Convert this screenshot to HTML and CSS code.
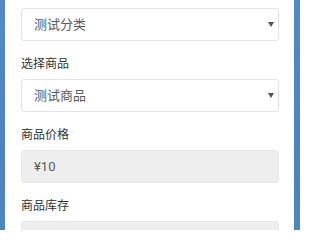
FILE: index.html
```html
<!DOCTYPE html>
<html lang="zh-CN">
<head>
<meta charset="utf-8">
<title>商品</title>
<link rel="stylesheet" href="styles.css">
</head>
<body>
<div class="frame">
  <div class="screen">
    <form class="form">
      <div class="field select"><span class="value">测试分类</span><span class="caret"></span></div>
      <label class="label">选择商品</label>
      <div class="field select"><span class="value">测试商品</span><span class="caret"></span></div>
      <label class="label">商品价格</label>
      <div class="field disabled"><span class="value">¥10</span></div>
      <label class="label">商品库存</label>
      <div class="field disabled"><span class="value"></span></div>
    </form>
  </div>
</div>
</body>
</html>
```
FILE: styles.css
```css
html, body {
  margin: 0;
  padding: 0;
  width: 300px;
  height: 230px;
  overflow: hidden;
}
body {
  font-family: Roboto, "Noto Sans CJK SC", sans-serif;
}
.frame {
  display: flex;
  height: 230px;
  padding: 0 6px 0 5px;
  background: linear-gradient(180deg, #5289c9 0%, #4d83c3 60%, #4a87c0 100%);
  box-sizing: border-box;
}
.screen {
  flex: 1;
  background: #fff;
  overflow: hidden;
}
.form {
  display: flex;
  flex-direction: column;
  padding: 8px 15px 0 16px;
}
.field {
  display: flex;
  align-items: center;
  height: 33px;
  box-sizing: border-box;
  border: 1px solid #e3e3e3;
  border-radius: 3px;
  padding: 0 4px 0 12px;
  background: #fff;
  flex-shrink: 0;
}
.field.disabled {
  background: #eeeeee;
  border-color: #e8e8e8;
}
.value {
  flex: 1;
  font-size: 13px;
  color: #5a5a5a;
  line-height: 17px;
}
.caret {
  width: 0;
  height: 0;
  border-left: 3px solid transparent;
  border-right: 3px solid transparent;
  border-top: 5px solid #555;
}
.label {
  display: block;
  margin: 15px 0 6px;
  font-size: 12px;
  line-height: 17px;
  color: #333;
}
```
